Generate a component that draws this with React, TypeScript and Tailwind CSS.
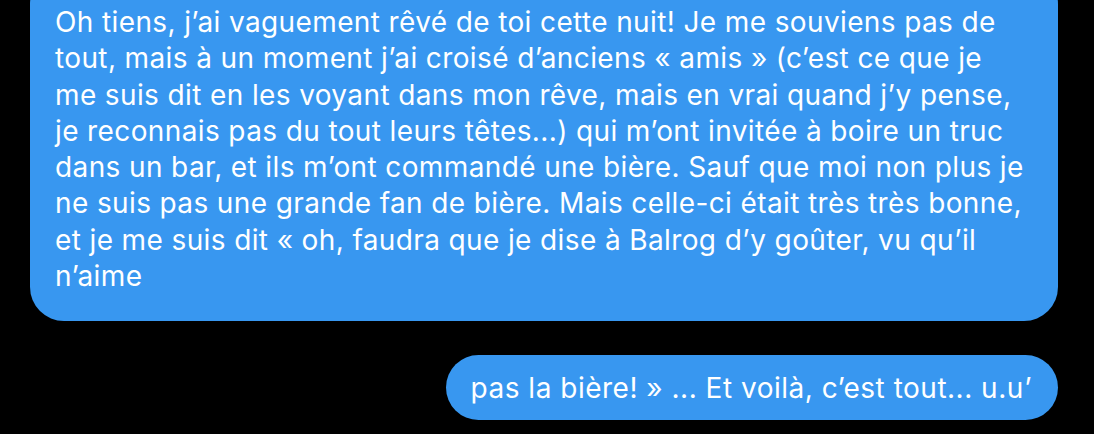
import React from 'react';

const firstLines = [
  'Oh tiens, j’ai vaguement rêvé de toi cette nuit! Je me souviens pas de',
  'tout, mais à un moment j’ai croisé d’anciens « amis » (c’est ce que je',
  'me suis dit en les voyant dans mon rêve, mais en vrai quand j’y pense,',
  'je reconnais pas du tout leurs têtes...) qui m’ont invitée à boire un truc',
  'dans un bar, et ils m’ont commandé une bière. Sauf que moi non plus je',
  'ne suis pas une grande fan de bière. Mais celle-ci était très très bonne,',
  'et je me suis dit « oh, faudra que je dise à Balrog d’y goûter, vu qu’il',
  'n’aime',
];

const App: React.FC = () => {
  return (
    <div
      className="w-[1094px] h-[434px] overflow-hidden bg-black text-white"
      style={{ fontFamily: 'Inter, "Noto Sans", sans-serif' }}
    >
      <div className="flex flex-col items-end pl-[30px] pr-[36px]">
        {/* Message bubble, top cut off */}
        <div className="w-full -mt-[30px] pt-[34px] pb-[27px] pl-[25px] pr-[20px] bg-[#3897f0] rounded-[34px] text-[28px] leading-[36.3px] tracking-[0.38px]">
          {firstLines.map((line, i) => (
            <div key={i} className="whitespace-nowrap">
              {line}
            </div>
          ))}
        </div>

        {/* Short follow-up bubble */}
        <div className="mt-[34px] h-[65px] pl-[25px] pr-[26px] flex items-center bg-[#3897f0] rounded-full text-[28px] tracking-[0.5px] whitespace-nowrap">
          pas la bière! » ... Et voilà, c’est tout... u.u’
        </div>
      </div>
    </div>
  );
};

export default App;
